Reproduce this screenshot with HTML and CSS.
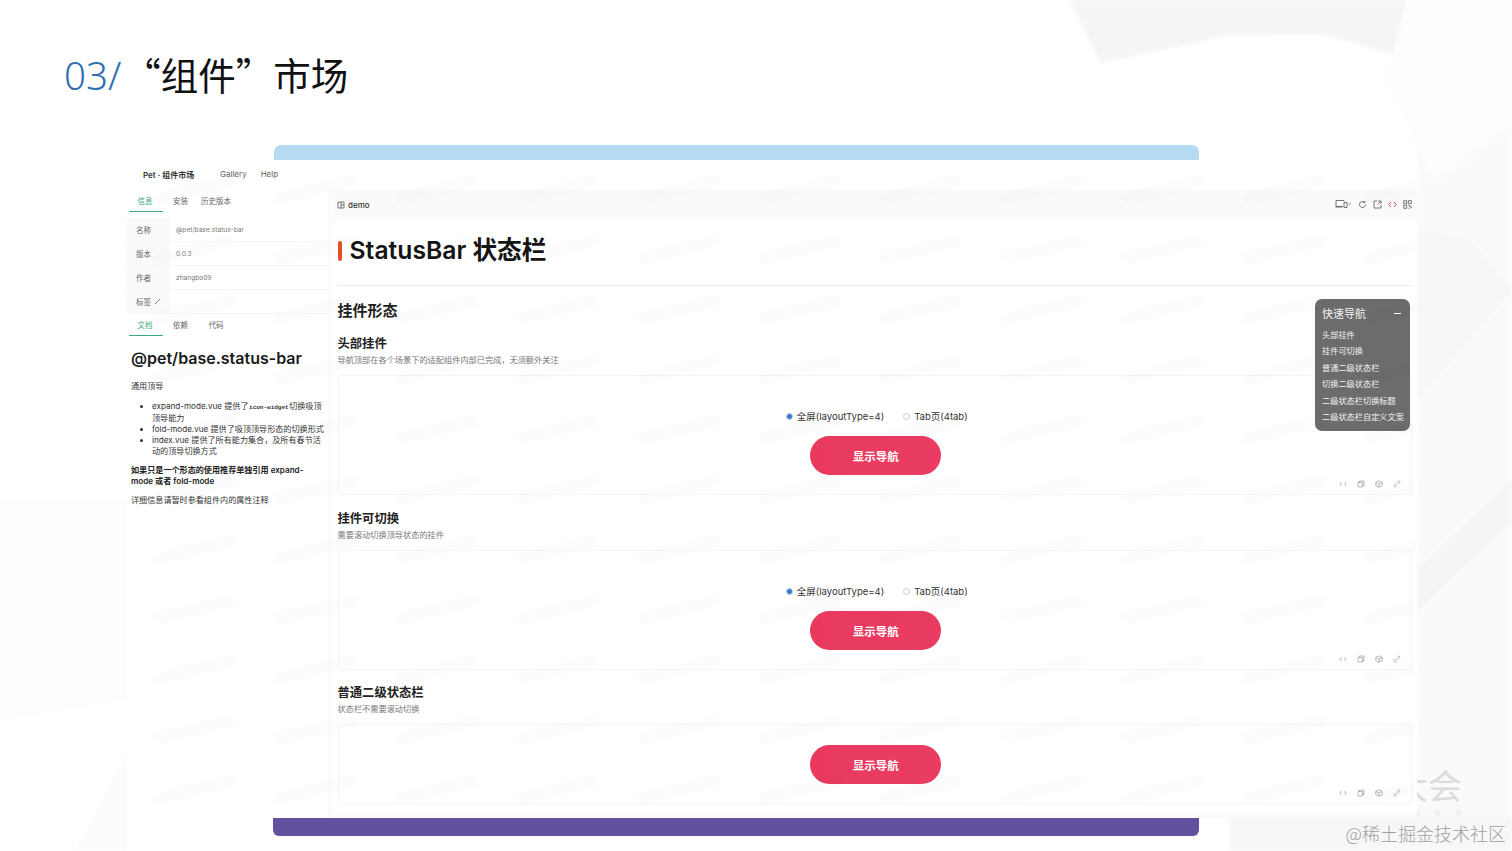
FILE: index.html
```html
<!DOCTYPE html>
<html lang="zh-CN">

<head>
    <meta charset="UTF-8">
    <meta name="viewport" content="width=device-width, initial-scale=1.0">
    <link rel="stylesheet" href="styles.css">
    <title>“组件”市场</title>
</head>

<body>
    <div class="slide">
        <svg class="backdrop" width="1512" height="851" viewBox="0 0 1512 851">
            <defs>
                <filter id="smooth"><feGaussianBlur stdDeviation="1.5" /></filter>
            </defs>
            <g filter="url(#smooth)">
                <polygon points="1070,0 1406,0 1396,55 1320,34 1230,35 1100,63" fill="#f5f5f5" />
                <polygon points="1406,0 1386,80 1432,183 1512,125 1512,0" fill="#fdfdfd" />
                <polygon points="1432,183 1512,125 1512,851 1230,851 1230,818 1417,818 1417,150" fill="#fafafa" />
                <polygon points="1417,230 1470,240 1512,290 1417,400" fill="#f7f7f7" />
                <polygon points="1417,570 1512,480 1512,520 1417,612" fill="#f5f5f5" />
                <polygon points="1230,818 1512,818 1512,851 1230,851" fill="#f7f7f7" />
                <polygon points="0,500 127,500 127,700 0,720" fill="#fdfdfd" />
                <polygon points="75,851 127,750 127,851" fill="#fcfcfc" />
            </g>
        </svg>

        <div class="expo-mark">
            <div class="expo-char">大会</div>
            <div class="expo-sub">技 术 未 来</div>
        </div>

        <h1 class="slide-title"><span class="slide-num">03/</span>“组件”市场</h1>

        <div class="stage">
            <div class="bar-blue"></div>
            <div class="app">
                <div class="app-header">
                    <span class="brand">Pet · 组件市场</span>
                    <span class="nav-link">Gallery</span>
                    <span class="nav-link">Help</span>
                </div>
                <div class="app-body">
                    <aside class="side">
                        <div class="tabs">
                            <span class="tab active">信息</span>
                            <span class="tab">安装</span>
                            <span class="tab">历史版本</span>
                        </div>
                        <div class="info">
                            <div class="info-row"><span class="info-key">名称</span><span class="info-val">@pet/base.status-bar</span></div>
                            <div class="info-row"><span class="info-key">版本</span><span class="info-val">0.0.3</span></div>
                            <div class="info-row"><span class="info-key">作者</span><span class="info-val">zhangbo09</span></div>
                            <div class="info-row">
                                <span class="info-key">标签
                                    <svg class="pencil" width="7" height="7" viewBox="0 0 7 7"><path d="M1 6 L6 1" /></svg>
                                </span>
                                <span class="info-val"></span>
                            </div>
                        </div>
                        <div class="tabs">
                            <span class="tab active">文档</span>
                            <span class="tab">依赖</span>
                            <span class="tab">代码</span>
                        </div>
                        <div class="doc">
                            <h2>@pet/base.status-bar</h2>
                            <p class="doc-lead">通用顶导</p>
                            <ul>
                                <li>expand-mode.vue 提供了<code>icon-widget</code>切换吸顶<br>顶导能力</li>
                                <li>fold-mode.vue 提供了吸顶顶导形态的切换形式</li>
                                <li>index.vue 提供了所有能力集合，及所有春节活<br>动的顶导切换方式</li>
                            </ul>
                            <p class="doc-strong">如果只是一个形态的使用推荐单独引用 expand-<br>mode 或者 fold-mode</p>
                            <p>详细信息请暂时参看组件内的属性注释</p>
                        </div>
                    </aside>

                    <main class="main">
                        <div class="demo-bar">
                            <span class="demo-name">
                                <svg class="icon" width="8" height="8" viewBox="0 0 8 8"><path d="M1 1h6v6H1zM4 1v6M4 4h3" /></svg>
                                demo
                            </span>
                            <div class="demo-tools">
                                <svg class="icon icon-device" width="16" height="10" viewBox="0 0 16 10"><path d="M8 7.5H1V1.5h8v1M0.5 8h7M9 3.5h3v5H9zM13.5 4.5l1 1 1-1" /></svg>
                                <svg class="icon" width="9" height="9" viewBox="0 0 9 9"><path d="M7.5 4.5a3 3 0 1 1-1-2.2M6.8 0.8v1.8H5" /></svg>
                                <svg class="icon" width="9" height="9" viewBox="0 0 9 9"><path d="M4 1H1v7h7V5M5 1h3v3M8 1L4.5 4.5" /></svg>
                                <svg class="icon icon-red" width="9" height="9" viewBox="0 0 9 9"><path d="M3 2L0.8 4.5 3 7M6 2l2.2 2.5L6 7" /></svg>
                                <svg class="icon" width="9" height="9" viewBox="0 0 9 9"><path d="M0.7 0.7h3v3h-3zM5.3 0.7h3v3h-3zM0.7 5.3h3v3h-3zM5.3 5.3h1.5v1.5h1.5v1.5M5.3 8.3h1" /></svg>
                            </div>
                        </div>

                        <div class="card">
                            <div class="card-head">
                                <span class="card-mark"></span>
                                <h1>StatusBar 状态栏</h1>
                            </div>
                            <h2 class="group-title">挂件形态</h2>

                            <section class="section">
                                <h3>头部挂件</h3>
                                <p class="section-desc">导航顶部在各个场景下的适配组件内部已完成，无须额外关注</p>
                                <div class="preview">
                                    <div class="radios">
                                        <span class="radio checked">全屏(layoutType=4)</span>
                                        <span class="radio">Tab页(4tab)</span>
                                    </div>
                                    <button class="show-btn">显示导航</button>
                                    <div class="preview-tools">
                                        <svg width="8" height="8" viewBox="0 0 8 8"><path d="M2.5 2L0.8 4l1.7 2M5.5 2l1.7 2-1.7 2" /></svg>
                                        <svg width="8" height="8" viewBox="0 0 8 8"><path d="M1 2.5h4.5V7H1zM2.5 2.5V1H7v4.5H5.5" /></svg>
                                        <svg width="8" height="8" viewBox="0 0 8 8"><path d="M4 0.8L7.2 2.4v3.2L4 7.2 0.8 5.6V2.4zM0.8 2.4L4 4l3.2-1.6M4 4v3.2" /></svg>
                                        <svg width="8" height="8" viewBox="0 0 8 8"><path d="M3.4 4.6l1.2-1.2M2.6 3.8L1.4 5a1.1 1.1 0 0 0 1.6 1.6l1.2-1.2M3.8 2.6L5 1.4A1.1 1.1 0 0 1 6.6 3L5.4 4.2" /></svg>
                                    </div>
                                </div>
                            </section>

                            <section class="section section-mid">
                                <h3>挂件可切换</h3>
                                <p class="section-desc">需要滚动切换顶导状态的挂件</p>
                                <div class="preview">
                                    <div class="radios">
                                        <span class="radio checked">全屏(layoutType=4)</span>
                                        <span class="radio">Tab页(4tab)</span>
                                    </div>
                                    <button class="show-btn">显示导航</button>
                                    <div class="preview-tools">
                                        <svg width="8" height="8" viewBox="0 0 8 8"><path d="M2.5 2L0.8 4l1.7 2M5.5 2l1.7 2-1.7 2" /></svg>
                                        <svg width="8" height="8" viewBox="0 0 8 8"><path d="M1 2.5h4.5V7H1zM2.5 2.5V1H7v4.5H5.5" /></svg>
                                        <svg width="8" height="8" viewBox="0 0 8 8"><path d="M4 0.8L7.2 2.4v3.2L4 7.2 0.8 5.6V2.4zM0.8 2.4L4 4l3.2-1.6M4 4v3.2" /></svg>
                                        <svg width="8" height="8" viewBox="0 0 8 8"><path d="M3.4 4.6l1.2-1.2M2.6 3.8L1.4 5a1.1 1.1 0 0 0 1.6 1.6l1.2-1.2M3.8 2.6L5 1.4A1.1 1.1 0 0 1 6.6 3L5.4 4.2" /></svg>
                                    </div>
                                </div>
                            </section>

                            <section class="section">
                                <h3>普通二级状态栏</h3>
                                <p class="section-desc">状态栏不需要滚动切换</p>
                                <div class="preview">
                                    <button class="show-btn">显示导航</button>
                                    <div class="preview-tools">
                                        <svg width="8" height="8" viewBox="0 0 8 8"><path d="M2.5 2L0.8 4l1.7 2M5.5 2l1.7 2-1.7 2" /></svg>
                                        <svg width="8" height="8" viewBox="0 0 8 8"><path d="M1 2.5h4.5V7H1zM2.5 2.5V1H7v4.5H5.5" /></svg>
                                        <svg width="8" height="8" viewBox="0 0 8 8"><path d="M4 0.8L7.2 2.4v3.2L4 7.2 0.8 5.6V2.4zM0.8 2.4L4 4l3.2-1.6M4 4v3.2" /></svg>
                                        <svg width="8" height="8" viewBox="0 0 8 8"><path d="M3.4 4.6l1.2-1.2M2.6 3.8L1.4 5a1.1 1.1 0 0 0 1.6 1.6l1.2-1.2M3.8 2.6L5 1.4A1.1 1.1 0 0 1 6.6 3L5.4 4.2" /></svg>
                                    </div>
                                </div>
                            </section>

                            <div class="quick-nav">
                                <div class="quick-head"><span>快速导航</span><span class="quick-dash"></span></div>
                                <div class="quick-item">头部挂件</div>
                                <div class="quick-item">挂件可切换</div>
                                <div class="quick-item">普通二级状态栏</div>
                                <div class="quick-item">切换二级状态栏</div>
                                <div class="quick-item">二级状态栏切换标题</div>
                                <div class="quick-item">二级状态栏自定义文案</div>
                            </div>
                        </div>
                    </main>
                </div>

                <!-- faint staff watermark lying over the whole app -->
                <svg class="app-watermark" width="1290" height="658">
                    <defs>
                        <pattern id="mark" patternUnits="userSpaceOnUse" x="26" y="0" width="121" height="60">
                            <rect x="0" y="24" width="84" height="11" rx="4" transform="rotate(-13 42 30)" fill="#000" />
                        </pattern>
                        <filter id="soft"><feGaussianBlur stdDeviation="2" /></filter>
                    </defs>
                    <rect width="1290" height="658" fill="url(#mark)" filter="url(#soft)" />
                </svg>
            </div>
            <div class="bar-purple"></div>
        </div>

        <div class="credit">@稀土掘金技术社区</div>
    </div>
</body>

</html>
```

FILE: styles.css
```css
html,
body {
    margin: 0;
    padding: 0;
    background-color: #fff;
}

body {
    font-family: Inter, "Noto Sans CJK SC", sans-serif;
    color: #222;
}

h1,
h2,
h3,
p,
ul {
    margin: 0;
    padding: 0;
}

.slide {
    position: relative;
    width: 1512px;
    height: 851px;
    overflow: hidden;
}

.backdrop {
    position: absolute;
    left: 0;
    top: 0;
}

.slide-title {
    position: relative;
    margin: 48px 0 0 64px;
    height: 52px;
    font-family: "Noto Sans CJK SC", sans-serif;
    font-size: 37.5px;
    line-height: 52px;
    font-weight: 400;
    color: #111;
}

.slide-num {
    font-family: "Noto Sans", sans-serif;
    font-size: 38.5px;
    font-weight: 300;
    color: #2e6fb0;
    margin-right: 2px;
}

.stage {
    position: relative;
    margin: 45px 0 0 127px;
    width: 1290px;
}

.bar-blue {
    margin-left: 147px;
    width: 925px;
    height: 15px;
    background-color: #b5daf2;
    border-radius: 7px 7px 0 0;
}

.bar-purple {
    margin-left: 146px;
    width: 926px;
    height: 18px;
    background-color: #63519f;
    border-radius: 0 0 6px 6px;
}

.app {
    position: relative;
    height: 658px;
    background-color: #fff;
    display: flex;
    flex-direction: column;
}

.app-watermark {
    position: absolute;
    left: 0;
    top: 0;
    opacity: 0.012;
    pointer-events: none;
}

.app-header {
    height: 30px;
    flex-shrink: 0;
    display: flex;
    align-items: center;
    padding: 0 0 2px 16px;
    box-sizing: border-box;
    font-size: 8px;
}

.brand {
    width: 77px;
    font-weight: 600;
    color: #333;
}

.nav-link {
    margin-right: 14px;
    color: #666;
}

.app-body {
    flex: 1;
    display: flex;
    min-height: 0;
}

/* left panel */
.side {
    width: 203px;
    padding-left: 2px;
    box-sizing: border-box;
    border-right: 1px solid #f4f4f4;
}

.tabs {
    display: flex;
    gap: 1.5px;
    height: 22px;
    font-size: 7.5px;
    color: #666;
}

.tab {
    width: 34px;
    white-space: nowrap;
    display: flex;
    align-items: center;
    justify-content: center;
    padding: 0 2px 1px 0;
    box-sizing: border-box;
}

.tab.active {
    color: #3fa87c;
    border-bottom: 1.5px solid #3fa87c;
}

.info {
    margin-top: 6px;
}

.info-row {
    height: 24px;
    display: flex;
    margin-left: -2px;
    font-size: 7.5px;
    border-bottom: 1px solid #f6f6f6;
    box-sizing: border-box;
}

.info-key {
    width: 43px;
    padding-left: 9px;
    box-sizing: border-box;
    display: flex;
    align-items: center;
    gap: 3px;
    background-color: #fafafa;
    color: #666;
}

.info-val {
    padding-left: 6px;
    display: flex;
    align-items: center;
    color: #777;
    font-size: 6.6px;
}

.pencil path {
    stroke: #666;
    stroke-width: 0.8;
    fill: none;
}

.doc {
    padding: 11px 3px 0 2px;
    font-size: 8.1px;
    line-height: 11px;
    color: #333;
}

.doc h2 {
    font-size: 16px;
    line-height: 22px;
    font-weight: 600;
    color: #1a1a1a;
    white-space: nowrap;
}

.doc-lead {
    margin-top: 12px;
}

.doc ul {
    margin: 9px 0 8px 21px;
}

.doc code {
    margin: 0 0.5px;
    font-family: "Liberation Mono", monospace;
    font-size: 6px;
    font-weight: 700;
}

.doc-strong {
    margin-bottom: 8px;
    font-weight: 600;
    color: #222;
}

/* right panel */
.main {
    flex: 1;
    margin-left: 2px;
    padding-left: 1px;
    background-color: #fafafa;
    display: flex;
    flex-direction: column;
    min-width: 0;
}

.demo-bar {
    height: 27px;
    flex-shrink: 0;
    display: flex;
    align-items: center;
    justify-content: space-between;
    padding: 1px 5px 0 4px;
    box-sizing: border-box;
}

.demo-name {
    display: flex;
    align-items: center;
    gap: 3px;
    margin-top: 2px;
    font-size: 8px;
    font-weight: 500;
    color: #333;
}

.demo-tools {
    display: flex;
    align-items: center;
    gap: 6px;
}

.icon path {
    fill: none;
    stroke: #555;
    stroke-width: 0.8;
}

.icon-device {
    margin-right: 1px;
}

.icon-red path {
    stroke: #c0395c;
    stroke-width: 0.9;
}

.card {
    position: relative;
    flex: 1;
    margin-bottom: 3px;
    background-color: #fff;
    border-radius: 5px;
    padding: 0 5px 0 4.5px;
}

.card-head {
    height: 69px;
    display: flex;
    align-items: center;
    gap: 8px;
    box-sizing: border-box;
    border-bottom: 1px solid #ececec;
}

.card-mark {
    width: 4px;
    height: 20px;
    border-radius: 2px;
    background-color: #e5502a;
}

.card-head h1 {
    margin-bottom: 2px;
    font-size: 24.7px;
    line-height: 30px;
    font-weight: 600;
    color: #151515;
}

.group-title {
    margin-top: 15px;
    font-size: 15px;
    line-height: 20px;
    font-weight: 700;
    color: #222;
}

.section {
    margin-top: 15px;
}

.section-mid {
    margin-top: 16px;
}

.section h3 {
    font-size: 12.3px;
    line-height: 16px;
    font-weight: 700;
    color: #222;
}

.section-desc {
    margin-top: 2px;
    margin-bottom: 9px;
    font-size: 8.2px;
    line-height: 12px;
    color: #777;
}

.preview {
    padding: 20px 0 5px 2px;
    border: 1px solid #f5f5f5;
    border-radius: 3px;
    box-sizing: border-box;
    display: flex;
    flex-direction: column;
    align-items: center;
}

.radios {
    height: 12px;
    margin: 14px 0 14px 2px;
    display: flex;
    align-items: center;
    gap: 19px;
    font-size: 9.5px;
    color: #333;
}

.radio {
    display: flex;
    align-items: center;
    gap: 4px;
    white-space: nowrap;
}

.radio::before {
    content: "";
    width: 5px;
    height: 5px;
    border: 1px solid #ccc;
    border-radius: 50%;
}

.radio.checked::before {
    background-color: #3b78c4;
    border-color: #bcd3ee;
}

.show-btn {
    width: 131px;
    height: 39px;
    border: none;
    border-radius: 20px;
    background: linear-gradient(90deg, #e93a5e, #ea3c62);
    color: #fff;
    font-family: inherit;
    font-size: 11.5px;
    font-weight: 700;
}

.preview-tools {
    align-self: flex-end;
    height: 10px;
    margin-top: 4px;
    margin-right: 10px;
    display: flex;
    align-items: center;
    gap: 10px;
}

.preview-tools path {
    fill: none;
    stroke: #999;
    stroke-width: 0.7;
}

.quick-nav {
    position: absolute;
    left: 982px;
    top: 82px;
    width: 95px;
    height: 132px;
    box-sizing: border-box;
    padding: 6px 9px 6px 7px;
    border-radius: 7px;
    background-color: #6c6c6c;
    color: #f2f2f2;
}

.quick-head {
    display: flex;
    align-items: center;
    justify-content: space-between;
    height: 16px;
    margin-bottom: 6px;
    font-size: 11px;
}

.quick-dash {
    width: 7px;
    height: 1px;
    background-color: #fff;
}

.quick-item {
    height: 16.4px;
    line-height: 16.4px;
    font-size: 8.2px;
    white-space: nowrap;
}

.expo-mark {
    position: absolute;
    left: 1392px;
    top: 764px;
    width: 70px;
    font-family: "Noto Sans CJK SC", sans-serif;
    text-align: right;
    color: #dcdcdc;
}

.expo-char {
    height: 42px;
    font-size: 34px;
    line-height: 42px;
    white-space: nowrap;
}

.expo-sub {
    margin-top: 2px;
    font-size: 8px;
    line-height: 10px;
    word-spacing: 11px;
    color: #e8e8e8;
    white-space: nowrap;
}

.credit {
    position: absolute;
    right: 6px;
    top: 821px;
    font-family: "Noto Sans CJK SC", sans-serif;
    font-size: 18px;
    line-height: 24px;
    font-weight: 300;
    color: #a0a0a0;
    white-space: nowrap;
}
```
